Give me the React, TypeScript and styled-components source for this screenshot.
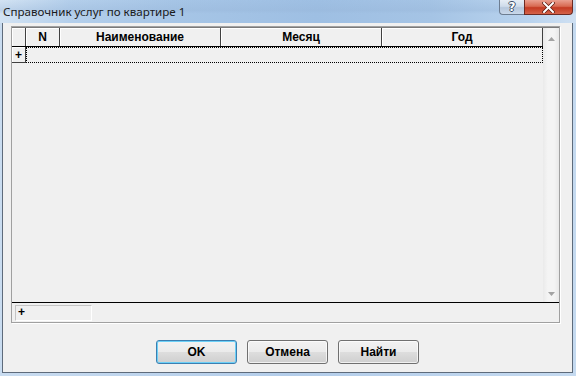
import styled, { createGlobalStyle } from "styled-components";

const GlobalStyle = createGlobalStyle`
  html, body {
    margin: 0;
    padding: 0;
    background: #bcd3ec;
    overflow: hidden;
  }
`;

const columns = [
  { title: "N", width: 34 },
  { title: "Наименование", width: 161 },
  { title: "Месяц", width: 161 },
  { title: "Год", width: 161 },
];

export default function App() {
  return (
    <>
      <GlobalStyle />
      <Window>
        <TitleBar>
          <Title>Справочник услуг по квартире 1</Title>
          <CaptionButtons>
            <HelpButton>?</HelpButton>
            <CloseButton>
              <svg width="13" height="11" viewBox="0 0 13 11">
                <path
                  d="M2 1 L11 10 M11 1 L2 10"
                  stroke="#5a1a10"
                  strokeWidth="3.4"
                  strokeLinecap="square"
                />
                <path
                  d="M2 1 L11 10 M11 1 L2 10"
                  stroke="#ffffff"
                  strokeWidth="2"
                  strokeLinecap="square"
                />
              </svg>
            </CloseButton>
          </CaptionButtons>
        </TitleBar>
        <Frame>
          <Client>
            <Panel>
              <GridBody>
                <Table>
                  <HeaderRow>
                    <IndicatorHead />
                    {columns.map((c) => (
                      <HeaderCell key={c.title} $width={c.width}>
                        {c.title}
                      </HeaderCell>
                    ))}
                  </HeaderRow>
                  <DataRow>
                    <Indicator>+</Indicator>
                    <FocusRow />
                  </DataRow>
                </Table>
                <Scrollbar>
                  <Arrow viewBox="0 0 7 4" width="7" height="4">
                    <path d="M3.5 0 L7 4 L0 4 Z" fill="#a3a3a3" />
                  </Arrow>
                  <Arrow viewBox="0 0 7 4" width="7" height="4">
                    <path d="M0 0 L7 0 L3.5 4 Z" fill="#a3a3a3" />
                  </Arrow>
                </Scrollbar>
              </GridBody>
              <Footer>
                <FooterCell>+</FooterCell>
              </Footer>
            </Panel>
            <ButtonRow>
              <Button $default>OK</Button>
              <Button>Отмена</Button>
              <Button>Найти</Button>
            </ButtonRow>
          </Client>
        </Frame>
      </Window>
    </>
  );
}

const Window = styled.div`
  width: 576px;
  height: 376px;
  display: flex;
  flex-direction: column;
  font-family: "Liberation Sans", Arial, sans-serif;
`;

const TitleBar = styled.div`
  height: 23px;
  display: flex;
  justify-content: space-between;
  align-items: flex-start;
  background:
    linear-gradient(180deg, rgba(255, 255, 255, 0) 0, rgba(150, 180, 215, 0.35) 45%, rgba(255, 255, 255, 0) 60%),
    linear-gradient(90deg, #d3e3f3 0, #b4cfeb 12%, #a6c5e6 30%, #9ebfe3 55%, #a5c4e5 75%, #b9d3ee 92%, #cfe0f2 100%);
`;

const Title = styled.div`
  padding: 5px 0 0 3px;
  font-family: "Noto Sans", "Open Sans", sans-serif;
  font-size: 11.6px;
  line-height: 14px;
  color: #1a1a1a;
`;

const CaptionButtons = styled.div`
  display: flex;
  margin-right: 3px;
`;

const HelpButton = styled.div`
  width: 25px;
  height: 15px;
  box-sizing: border-box;
  border: 1px solid #6d7d91;
  border-top: none;
  border-right: none;
  border-bottom-left-radius: 4px;
  background: linear-gradient(180deg, #e6edf5 0, #cfdceb 45%, #b6c7dc 55%, #c9d8ea 100%);
  color: #fff;
  font-family: "DejaVu Sans", sans-serif;
  font-weight: bold;
  font-size: 12px;
  line-height: 14px;
  text-align: center;
  text-shadow: 1px 0 0 #3c4e66, -1px 0 0 #3c4e66, 0 1px 0 #3c4e66, 0 -1px 0 #3c4e66;
`;

const CloseButton = styled.div`
  width: 49px;
  height: 15px;
  box-sizing: border-box;
  border: 1px solid #6d2a22;
  border-top: none;
  border-bottom-right-radius: 4px;
  background: linear-gradient(180deg, #eaa090 0, #d86a52 45%, #c43a22 55%, #d5634a 100%);
  display: flex;
  align-items: center;
  justify-content: center;
`;

const Frame = styled.div`
  flex: 1;
  display: flex;
  padding: 0 3px 3px 2px;
  background: linear-gradient(90deg, #c9dcf0 0, #b3cdea 50%, #c5daf0 100%);
`;

const Client = styled.div`
  flex: 1;
  display: flex;
  flex-direction: column;
  background: #f0f0f0;
  border: 1px solid #5e6b7b;
  border-top: none;
`;

const Panel = styled.div`
  height: 297px;
  box-sizing: border-box;
  margin: 3px 12px 0 8px;
  border: 1px solid #a0a0a0;
  box-shadow: 1px 1px 0 #ffffff;
  display: flex;
  flex-direction: column;
`;

const GridBody = styled.div`
  flex: 1;
  display: flex;
`;

const Table = styled.div`
  width: 531px;
  display: flex;
  flex-direction: column;
`;

const HeaderRow = styled.div`
  display: flex;
  height: 20px;
  box-sizing: border-box;
  border-top: 1px solid #7a7a7a;
  border-bottom: 1px solid #000;
`;

const IndicatorHead = styled.div`
  width: 14px;
  box-sizing: border-box;
  border-right: 1px solid #404040;
  box-shadow: inset 1px 1px 0 #ffffff;
`;

const HeaderCell = styled.div<{ $width: number }>`
  width: ${(p) => p.$width}px;
  box-sizing: border-box;
  border-right: 1px solid #404040;
  box-shadow: inset 1px 1px 0 #ffffff;
  font-weight: bold;
  font-size: 12px;
  line-height: 18px;
  text-align: center;
  color: #000;
`;

const DataRow = styled.div`
  display: flex;
  height: 16px;
`;

const Indicator = styled.div`
  width: 14px;
  box-sizing: border-box;
  border-right: 1px solid #404040;
  border-bottom: 1px solid #404040;
  box-shadow: inset 1px 1px 0 #ffffff;
  font-weight: bold;
  font-size: 12px;
  line-height: 16px;
  text-align: center;
  color: #000;
`;

const FocusRow = styled.div`
  flex: 1;
  box-sizing: border-box;
  border: 1px dotted #000;
`;

const Scrollbar = styled.div`
  width: 16px;
  display: flex;
  flex-direction: column;
  justify-content: space-between;
  align-items: center;
  padding: 9px 0 6px;
  box-sizing: border-box;
  background: linear-gradient(90deg, #eaeaea 0, #f4f4f4 30%, #f4f4f4 70%, #e8e8e8 100%);
  border-top: 1px solid #7a7a7a;
`;

const Arrow = styled.svg`
  display: block;
`;

const Footer = styled.div`
  height: 20px;
  box-sizing: border-box;
  border-top: 1px solid #000;
  display: flex;
  align-items: flex-start;
  padding: 2px 0 0 3px;
`;

const FooterCell = styled.div`
  width: 77px;
  height: 16px;
  box-sizing: border-box;
  border: 1px solid #c4c4c4;
  border-right-color: #ffffff;
  border-bottom-color: #ffffff;
  font-weight: bold;
  font-size: 12px;
  line-height: 13px;
  padding-left: 2px;
  color: #000;
`;

const ButtonRow = styled.div`
  display: flex;
  justify-content: center;
  gap: 10px;
  padding-top: 17px;
`;

const Button = styled.div<{ $default?: boolean }>`
  width: 81px;
  height: 24px;
  box-sizing: border-box;
  border: 1px solid ${(p) => (p.$default ? "#3c7fb1" : "#707070")};
  border-radius: 3px;
  background: linear-gradient(180deg, #f2f2f2 0, #ebebeb 48%, #dddddd 52%, #cfcfcf 100%);
  box-shadow: inset 0 0 0 1px ${(p) => (p.$default ? "#6cd0f7" : "rgba(255,255,255,0.7)")};
  font-weight: bold;
  font-size: 12px;
  line-height: 22px;
  text-align: center;
  color: #000;
`;
